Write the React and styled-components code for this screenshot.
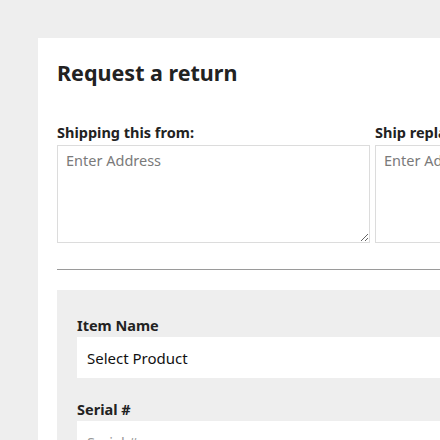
import styled, { createGlobalStyle } from "styled-components";

const GlobalStyle = createGlobalStyle`
  html, body {
    margin: 0;
    padding: 0;
    background: #eeeeee;
    overflow: hidden;
  }
  body {
    font-family: "Noto Sans", "Open Sans", sans-serif;
    color: #222;
  }
`;

const Page = styled.div`
  padding: 38px 0 0 38px;
  width: 800px;
`;

const Card = styled.div`
  background: #fff;
  padding: 20px 19px 40px;
  min-height: 500px;
`;

const Title = styled.h1`
  margin: 0 0 35px;
  font-size: 21.5px;
  line-height: 30px;
  font-weight: 700;
  color: #222;
`;

const AddressGrid = styled.div`
  display: grid;
  grid-template-columns: 313px 313px;
  column-gap: 5px;
`;

const Field = styled.div`
  display: flex;
  flex-direction: column;
`;

const Label = styled.label`
  font-size: 14.5px;
  font-weight: 700;
  line-height: 18px;
  margin-bottom: ${({ $gap }) => $gap}px;
  color: #222;
`;

const TextArea = styled.textarea`
  box-sizing: border-box;
  height: 98px;
  border: 1px solid #dcdcdc;
  padding: 5px 8px;
  font-family: inherit;
  font-size: 14.5px;
  line-height: 18px;
  color: #333;
  resize: vertical;
  outline: none;
  &::placeholder {
    color: #7a7a7a;
  }
`;

const Divider = styled.hr`
  border: none;
  border-top: 1px solid #9a9a9a;
  margin: 26px 0 20px;
`;

const ItemPanel = styled.div`
  background: #eeeeee;
  padding: 26px 19px 30px 20px;
  display: flex;
  flex-direction: column;
  gap: 22px;
`;

const Select = styled.select`
  box-sizing: border-box;
  height: 41px;
  border: none;
  background: #fff;
  padding: 0 10px;
  font-family: inherit;
  font-size: 15px;
  color: #111;
  appearance: none;
  outline: none;
`;

const Input = styled.input`
  box-sizing: border-box;
  height: 41px;
  border: none;
  background: #fff;
  padding: 0 10px;
  font-family: inherit;
  font-size: 14.5px;
  outline: none;
  &::placeholder {
    color: #999;
  }
`;

export default function App() {
  return (
    <>
      <GlobalStyle />
      <Page>
        <Card>
          <Title>Request a return</Title>
          <AddressGrid>
            <Field>
              <Label $gap={4}>Shipping this from:</Label>
              <TextArea placeholder="Enter Address" />
            </Field>
            <Field>
              <Label $gap={4}>Ship replacement to:</Label>
              <TextArea placeholder="Enter Address" />
            </Field>
          </AddressGrid>
          <Divider />
          <ItemPanel>
            <Field>
              <Label $gap={3}>Item Name</Label>
              <Select defaultValue="">
                <option value="">Select Product</option>
              </Select>
            </Field>
            <Field>
              <Label $gap={3}>Serial #</Label>
              <Input placeholder="Serial #" />
            </Field>
          </ItemPanel>
        </Card>
      </Page>
    </>
  );
}
